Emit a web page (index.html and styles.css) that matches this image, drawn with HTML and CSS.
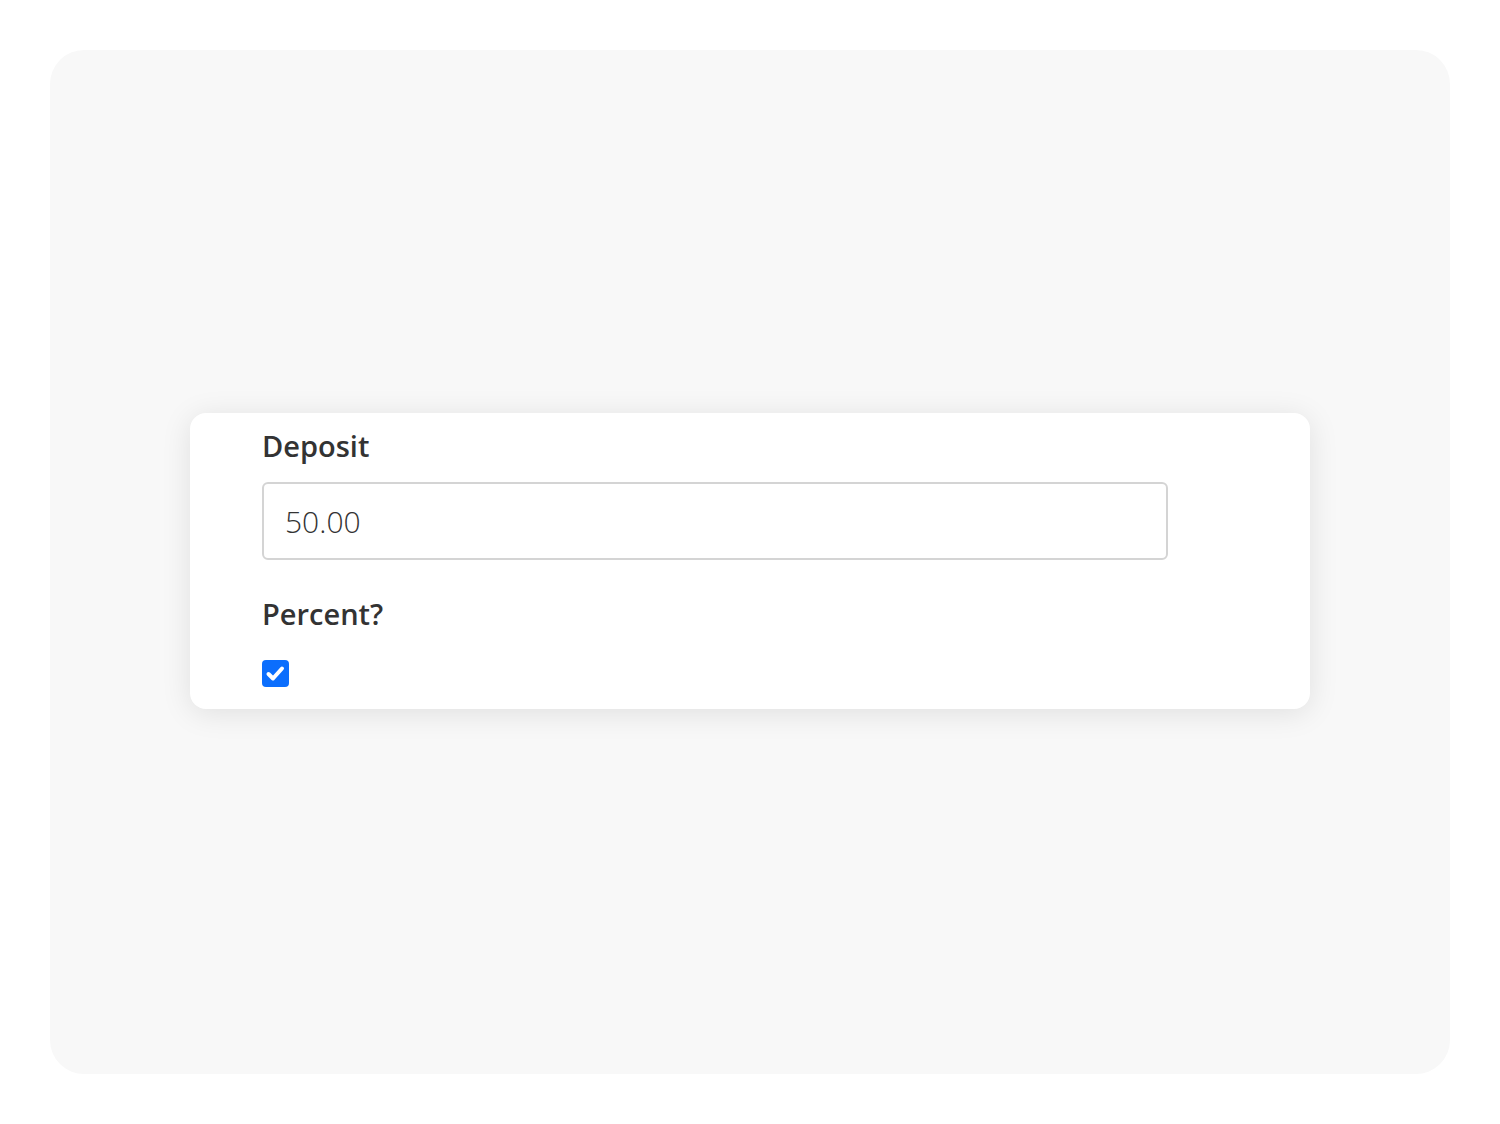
FILE: index.html
```html
<!DOCTYPE html>
<html lang="en">
<head>
<meta charset="utf-8">
<title>Deposit</title>
<link rel="stylesheet" href="styles.css">
</head>
<body>
<div class="panel">
  <form class="card">
    <label class="label" for="deposit">Deposit</label>
    <div class="input" id="deposit">50.00</div>
    <label class="label label-second">Percent?</label>
    <span class="check" role="checkbox" aria-checked="true">
      <svg viewBox="0 0 27 27" width="27" height="27"><path d="M6.5 14 L11 18.5 L20 8.5" fill="none" stroke="#fff" stroke-width="4" stroke-linecap="round" stroke-linejoin="round"/></svg>
    </span>
  </form>
</div>
</body>
</html>
```
FILE: styles.css
```css
html, body {
  margin: 0;
  padding: 0;
  background: #ffffff;
}
body {
  padding: 50px;
  font-family: "Open Sans", "Noto Sans", sans-serif;
  color: #2b2b2b;
}
.panel {
  width: 1400px;
  height: 1024px;
  background: #f8f8f8;
  border-radius: 34px;
  display: flex;
  align-items: center;
  justify-content: center;
}
.card {
  width: 1120px;
  box-sizing: border-box;
  margin-top: -2px;
  background: #ffffff;
  border-radius: 16px;
  box-shadow: 0 4px 30px rgba(0, 0, 0, 0.10);
  padding: 13px 72px 22px 72px;
  display: flex;
  flex-direction: column;
  align-items: flex-start;
}
.label {
  font-size: 29px;
  line-height: 40px;
  font-weight: 560;
  color: #333333;
}
.input {
  margin-top: 16px;
  width: 906px;
  height: 78px;
  box-sizing: border-box;
  border: 2px solid #d4d4d4;
  border-radius: 6px;
  padding: 0 21px;
  display: flex;
  align-items: center;
  font-size: 30px;
  font-weight: 300;
  color: #333;
}
.label-second {
  margin-top: 34px;
}
.check {
  margin-top: 26px;
  width: 27px;
  height: 27px;
  border-radius: 4px;
  background: #0b6efd;
  display: block;
}
.check svg {
  display: block;
}
```
